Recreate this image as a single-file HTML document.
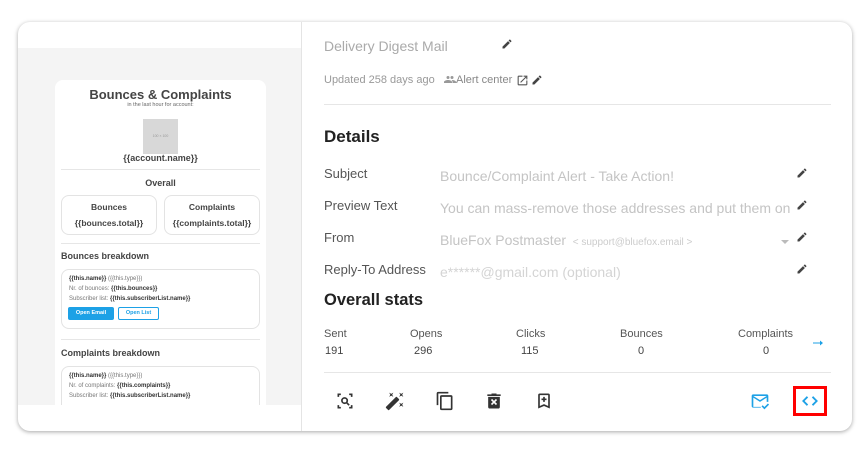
<!DOCTYPE html>
<html><head><style>
*{box-sizing:border-box;margin:0;padding:0}
body{width:866px;height:449px;background:#fff;font-family:"Liberation Sans",Arial,sans-serif;position:relative;overflow:hidden}
.a{position:absolute;white-space:nowrap}
.card{position:absolute;left:18px;top:22px;width:834px;height:409px;border-radius:12px;background:#fff;box-shadow:0 1px 4px rgba(0,0,0,.35);overflow:hidden}
.gray{position:absolute;left:0;top:26px;width:283px;height:357px;background:#f4f4f4;overflow:hidden}
.vdiv{position:absolute;left:283px;top:0;width:1px;height:409px;background:#e4e4e4}
.ec{position:absolute;left:37px;top:32px;width:211px;height:340px;background:#fff;border-radius:8px}
.b{font-weight:bold;color:#444}
.hr{position:absolute;height:1px;background:#e6e6e6}
.box{position:absolute;border:1px solid #e3e3e3;border-radius:8px}
.sm{font-size:6px;color:#777}
.sm b{color:#333}
.lbl{font-size:13px;color:#555}
.val{font-size:14px;color:#c4c4c4}
svg{position:absolute}
</style></head><body>
<div class="card">
<div class="gray">
<div class="ec">
<div class="a b" style="left:0;width:211px;text-align:center;top:7px;font-size:13px">Bounces &amp; Complaints</div>
<div class="a" style="left:0;width:211px;text-align:center;top:22px;font-size:5.5px;color:#666">in the last hour for account:</div>
<div class="a" style="left:88px;top:39px;width:35px;height:35px;background:#d8d8d8;font-size:3.5px;color:#999;text-align:center;line-height:35px">100 × 100</div>
<div class="a b" style="left:0;width:211px;text-align:center;top:73px;font-size:9px">{{account.name}}</div>
<div class="hr" style="left:6px;width:199px;top:89px"></div>
<div class="a b" style="left:0;width:211px;text-align:center;top:98px;font-size:9px">Overall</div>
<div class="box" style="left:6px;top:115px;width:96px;height:40px"></div>
<div class="box" style="left:109px;top:115px;width:96px;height:40px"></div>
<div class="a b" style="left:6px;width:96px;text-align:center;top:122px;font-size:8.5px">Bounces</div>
<div class="a b" style="left:6px;width:96px;text-align:center;top:138px;font-size:8.5px">{{bounces.total}}</div>
<div class="a b" style="left:109px;width:96px;text-align:center;top:122px;font-size:8.5px">Complaints</div>
<div class="a b" style="left:109px;width:96px;text-align:center;top:138px;font-size:8.5px">{{complaints.total}}</div>
<div class="hr" style="left:6px;width:199px;top:163px"></div>
<div class="a b" style="left:6px;top:171px;font-size:9px">Bounces breakdown</div>
<div class="box" style="left:6px;top:189px;width:199px;height:60px"></div>
<div class="a sm" style="left:14px;top:196px"><b>{{this.name}}</b> ({{this.type}})</div>
<div class="a sm" style="left:14px;top:206px">Nr. of bounces: <b>{{this.bounces}}</b></div>
<div class="a sm" style="left:14px;top:216px">Subscriber list: <b>{{this.subscriberList.name}}</b></div>
<div class="a" style="left:13px;top:227px;width:46px;height:13px;background:#1da1e6;border-radius:2px;color:#fff;font-size:5.5px;font-weight:bold;text-align:center;line-height:13px">Open Email</div>
<div class="a" style="left:63px;top:227px;width:41px;height:13px;border:1px solid #1da1e6;border-radius:2px;color:#1da1e6;font-size:5.5px;font-weight:bold;text-align:center;line-height:11px">Open List</div>
<div class="hr" style="left:6px;width:199px;top:259px"></div>
<div class="a b" style="left:6px;top:268px;font-size:9px">Complaints breakdown</div>
<div class="box" style="left:6px;top:286px;width:199px;height:60px"></div>
<div class="a sm" style="left:14px;top:293px"><b>{{this.name}}</b> ({{this.type}})</div>
<div class="a sm" style="left:14px;top:303px">Nr. of complaints: <b>{{this.complaints}}</b></div>
<div class="a sm" style="left:14px;top:313px">Subscriber list: <b>{{this.subscriberList.name}}</b></div>
</div>
</div>
<div class="vdiv"></div>
</div>
<!-- right side -->
<div class="a" style="left:324px;top:38px;font-size:14px;color:#aaa">Delivery Digest Mail</div>
<svg style="left:501px;top:38px" width="12" height="12" viewBox="0 0 24 24"><path fill="#444" d="M3 17.25V21h3.75L17.81 9.94l-3.75-3.75L3 17.25zM20.71 7.04a1 1 0 000-1.41l-2.34-2.34a1 1 0 00-1.41 0l-1.83 1.83 3.75 3.75 1.83-1.83z"/></svg>
<div class="a" style="left:324px;top:74px;font-size:11px;color:#999">Updated 258 days ago</div>
<svg style="left:444px;top:75px" width="12" height="10" viewBox="0 0 24 20"><path fill="#999" d="M8 8a3 3 0 100-6 3 3 0 000 6zm8 0a3 3 0 100-6 3 3 0 000 6zM8 10c-3 0-8 1.5-8 4v2h16v-2c0-2.5-5-4-8-4zm8 0c-.3 0-.7 0-1 .1 1.2.9 2 2 2 3.9v2h7v-2c0-2.5-5-4-8-4z"/></svg>
<div class="a" style="left:456px;top:74px;font-size:11px;color:#888">Alert center</div>
<svg style="left:516px;top:74px" width="13" height="13" viewBox="0 0 24 24"><path fill="#555" d="M19 19H5V5h7V3H5a2 2 0 00-2 2v14a2 2 0 002 2h14c1.1 0 2-.9 2-2v-7h-2v7zM14 3v2h3.59l-9.83 9.83 1.41 1.41L19 6.41V10h2V3h-7z"/></svg>
<svg style="left:531px;top:74px" width="12" height="12" viewBox="0 0 24 24"><path fill="#444" d="M3 17.25V21h3.75L17.81 9.94l-3.75-3.75L3 17.25zM20.71 7.04a1 1 0 000-1.41l-2.34-2.34a1 1 0 00-1.41 0l-1.83 1.83 3.75 3.75 1.83-1.83z"/></svg>
<div class="hr" style="left:324px;width:507px;top:104px"></div>
<div class="a" style="left:324px;top:127px;font-size:17px;font-weight:bold;color:#222">Details</div>
<div class="a lbl" style="left:324px;top:166px">Subject</div>
<div class="a val" style="left:440px;top:168px">Bounce/Complaint Alert - Take Action!</div>
<div class="a lbl" style="left:324px;top:198px">Preview Text</div>
<div class="a val" style="left:440px;top:200px;width:356px;overflow:hidden">You can mass-remove those addresses and put them on</div>
<div class="a lbl" style="left:324px;top:230px">From</div>
<div class="a val" style="left:440px;top:232px">BlueFox Postmaster <span style="font-size:10px;color:#ccc">&nbsp;&lt; support@bluefox.email &gt;</span></div>
<div class="a" style="left:781px;top:240px;border-left:4px solid transparent;border-right:4px solid transparent;border-top:4px solid #bbb"></div>
<div class="a lbl" style="left:324px;top:262px">Reply-To Address</div>
<div class="a val" style="left:440px;top:264px;color:#d4d4d4">e******@gmail.com (optional)</div>
<svg style="left:796px;top:167px" width="12" height="12" viewBox="0 0 24 24"><path fill="#444" d="M3 17.25V21h3.75L17.81 9.94l-3.75-3.75L3 17.25zM20.71 7.04a1 1 0 000-1.41l-2.34-2.34a1 1 0 00-1.41 0l-1.83 1.83 3.75 3.75 1.83-1.83z"/></svg>
<svg style="left:796px;top:199px" width="12" height="12" viewBox="0 0 24 24"><path fill="#444" d="M3 17.25V21h3.75L17.81 9.94l-3.75-3.75L3 17.25zM20.71 7.04a1 1 0 000-1.41l-2.34-2.34a1 1 0 00-1.41 0l-1.83 1.83 3.75 3.75 1.83-1.83z"/></svg>
<svg style="left:796px;top:231px" width="12" height="12" viewBox="0 0 24 24"><path fill="#444" d="M3 17.25V21h3.75L17.81 9.94l-3.75-3.75L3 17.25zM20.71 7.04a1 1 0 000-1.41l-2.34-2.34a1 1 0 00-1.41 0l-1.83 1.83 3.75 3.75 1.83-1.83z"/></svg>
<svg style="left:796px;top:263px" width="12" height="12" viewBox="0 0 24 24"><path fill="#444" d="M3 17.25V21h3.75L17.81 9.94l-3.75-3.75L3 17.25zM20.71 7.04a1 1 0 000-1.41l-2.34-2.34a1 1 0 00-1.41 0l-1.83 1.83 3.75 3.75 1.83-1.83z"/></svg>
<div class="a" style="left:324px;top:291px;font-size:16.5px;font-weight:bold;color:#222">Overall stats</div>
<div class="a" style="left:324px;top:328px;font-size:11px;color:#555">Sent</div>
<div class="a" style="left:410px;top:328px;font-size:11px;color:#555">Opens</div>
<div class="a" style="left:516px;top:328px;font-size:11px;color:#555">Clicks</div>
<div class="a" style="left:620px;top:328px;font-size:11px;color:#555">Bounces</div>
<div class="a" style="left:738px;top:328px;font-size:11px;color:#555">Complaints</div>
<div class="a" style="left:325px;top:345px;font-size:11px;color:#444">191</div>
<div class="a" style="left:414px;top:345px;font-size:11px;color:#444">296</div>
<div class="a" style="left:521px;top:345px;font-size:11px;color:#444">115</div>
<div class="a" style="left:638px;top:345px;font-size:11px;color:#444">0</div>
<div class="a" style="left:763px;top:345px;font-size:11px;color:#444">0</div>
<svg style="left:811px;top:337px" width="14" height="12" viewBox="0 0 24 24"><path fill="#1da1e6" d="M16 11H2v2h14v4l6-5-6-5z"/></svg>
<div class="hr" style="left:324px;width:507px;top:372px"></div>
<svg style="left:335px;top:391px" width="20" height="20" viewBox="0 0 24 24"><path fill="#333" d="M7 3H3v4h2V5h2zM17 3v2h2v2h2V3zM5 17H3v4h4v-2H5zM19 19h-2v2h4v-4h-2z"/><circle cx="11.5" cy="11.5" r="3.2" fill="none" stroke="#333" stroke-width="2"/><path stroke="#333" stroke-width="2" d="M14 14l3 3"/></svg>
<svg style="left:385px;top:391px" width="20" height="20" viewBox="0 0 24 24"><path fill="#333" d="M7.5 5.6L10 7 8.6 4.5 10 2 7.5 3.4 5 2l1.4 2.5L5 7zm12 9.8L17 14l1.4 2.5L17 19l2.5-1.4L22 19l-1.4-2.5L22 14zM22 2l-2.5 1.4L17 2l1.4 2.5L17 7l2.5-1.4L22 7l-1.4-2.5zm-7.63 5.29a1 1 0 00-1.41 0L1.29 18.96a1 1 0 000 1.41l2.34 2.34a1 1 0 001.41 0L16.7 11.05a1 1 0 000-1.41z"/></svg>
<svg style="left:435px;top:391px" width="20" height="20" viewBox="0 0 24 24"><path fill="#333" d="M16 1H4a2 2 0 00-2 2v14h2V3h12V1zm3 4H8a2 2 0 00-2 2v14a2 2 0 002 2h11a2 2 0 002-2V7a2 2 0 00-2-2zm0 16H8V7h11v14z"/></svg>
<svg style="left:484px;top:391px" width="20" height="20" viewBox="0 0 24 24"><path fill="#333" d="M15 4V3H9v1H4v2h16V4zM5 7v12a2 2 0 002 2h10a2 2 0 002-2V7zm9.3 9.9L12 14.6l-2.3 2.3-1.4-1.4 2.3-2.3-2.3-2.3 1.4-1.4 2.3 2.3 2.3-2.3 1.4 1.4-2.3 2.3 2.3 2.3z"/></svg>
<svg style="left:534px;top:391px" width="20" height="20" viewBox="0 0 24 24"><path fill="#333" d="M17 3H7a2 2 0 00-2 2v16l7-3 7 3V5a2 2 0 00-2-2zm0 15l-5-2.2L7 18V5h10zM11 7h2v2h2v2h-2v2h-2v-2H9V9h2z"/></svg>
<svg style="left:750px;top:391px" width="20" height="20" viewBox="0 0 24 24"><path fill="#1da1e6" d="M13 19H4V8l8 5 8-5v5h2V6a2 2 0 00-2-2H4a2 2 0 00-2 2v12a2 2 0 002 2h9zM20 6l-8 5-8-5zM17.3 22l-3.5-3.5 1.4-1.4 2.1 2.1 4.2-4.2 1.4 1.4z"/></svg>
<div class="a" style="left:793px;top:386px;width:34px;height:30px;border:3px solid #f00"></div>
<svg style="left:800px;top:391px" width="20" height="20" viewBox="0 0 24 24"><path fill="none" stroke="#1da1e6" stroke-width="2.2" d="M9 7l-5 5 5 5M15 7l5 5-5 5"/></svg>
</body></html>
